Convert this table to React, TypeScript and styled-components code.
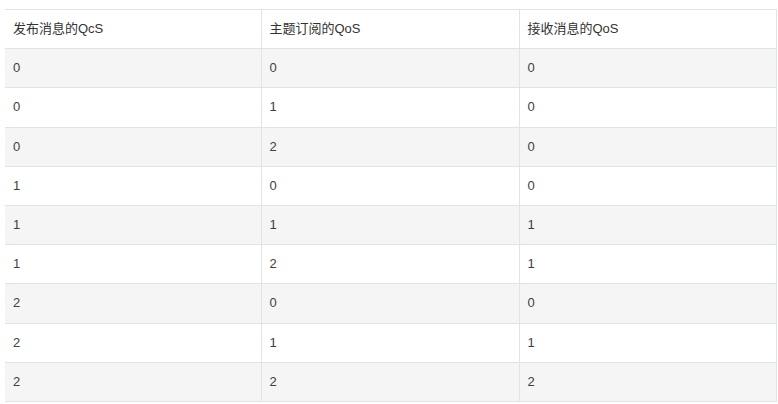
import React from 'react'
import styled, {createGlobalStyle} from 'styled-components'

const borderColor = '#e1e4e5';

const GlobalStyle = createGlobalStyle`
  body {
    margin: 0;
    background: #fff;
    font-family: "Liberation Sans", Arial, "Noto Sans CJK SC", sans-serif;
  }
`

const Page = styled.div`
  padding: 9px 2px 0 5px;
`

const QosTable = styled.table`
  width: 771px;
  table-layout: fixed;
  border-collapse: collapse;
  border-top: 1px solid ${borderColor};
  border-right: 1px solid ${borderColor};
  font-size: 13px;
  color: #404040;
`

const Col = styled.col<{ w: number }>`
  width: ${({w}) => w}px;
`

const Row = styled.tr<{ striped?: boolean }>`
  background: ${({striped}) => striped ? '#f5f5f5' : '#fff'};
`

const Cell = styled.td`
  padding: 10px 8px;
  line-height: 18.2px;
  text-align: left;
  border-bottom: 1px solid ${borderColor};
  border-left: 1px solid ${borderColor};
  &:first-child {
    border-left: none;
  }
`

const HeadCell = styled(Cell).attrs({as: 'th'})`
  font-weight: normal;
  color: #333;
`

const headers = ['发布消息的QcS', '主题订阅的QoS', '接收消息的QoS'];

const rows = [
    [0, 0, 0],
    [0, 1, 0],
    [0, 2, 0],
    [1, 0, 0],
    [1, 1, 1],
    [1, 2, 1],
    [2, 0, 0],
    [2, 1, 1],
    [2, 2, 2],
];

function App() {
    return (
        <Page>
            <GlobalStyle/>
            <QosTable>
                <colgroup>
                    <Col w={256}/>
                    <Col w={258}/>
                    <Col w={257}/>
                </colgroup>
                <thead>
                <Row>
                    {headers.map(h => <HeadCell key={h}>{h}</HeadCell>)}
                </Row>
                </thead>
                <tbody>
                {rows.map((r, i) => (
                    <Row key={i} striped={i % 2 === 0}>
                        {r.map((v, j) => <Cell key={j}>{v}</Cell>)}
                    </Row>
                ))}
                </tbody>
            </QosTable>
        </Page>
    );
}

export default App;
